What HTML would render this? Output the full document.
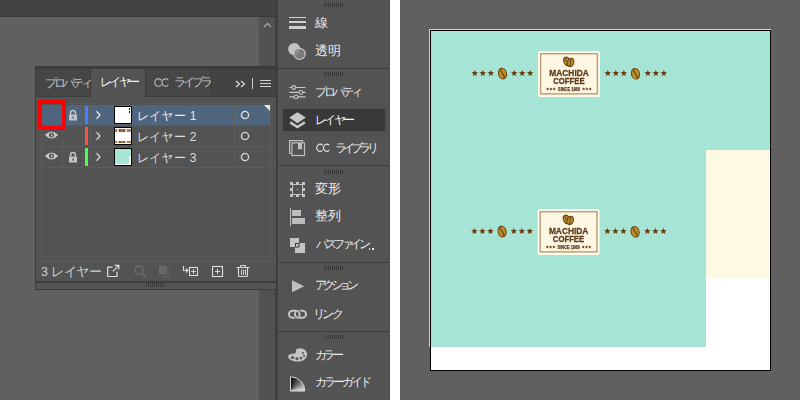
<!DOCTYPE html>
<html><head><meta charset="utf-8">
<style>
*{box-sizing:border-box;margin:0;padding:0}
html,body{width:800px;height:400px;overflow:hidden;background:#606060;font-family:"Liberation Sans",sans-serif;position:relative}
div,span,svg{position:absolute}
.t{color:#e4e4e4;font-size:11px;line-height:12px;white-space:nowrap}
.rt{color:#e6e6e6;font-size:11px;line-height:12px;white-space:nowrap;left:39px}
.grip{height:4px;background:repeating-linear-gradient(90deg,#3a3a3a 0 1px,transparent 1px 2px)}
</style></head><body>
<!-- LEFT CANVAS AREA -->
<div style="left:0;top:0;width:276px;height:400px;background:#606060"></div>
<div style="left:0;top:0;width:276px;height:16px;background:#434343"></div>
<div style="left:0;top:16px;width:276px;height:1px;background:#393939"></div>
<div style="left:259px;top:17px;width:16px;height:383px;background:#515151"></div>
<svg style="left:263px;top:21px" width="10" height="8" viewBox="0 0 10 8"><path d="M1 6 L4.5 2.4 L8 6" fill="none" stroke="#a8a8a8" stroke-width="1.3"/></svg>
<div style="left:275px;top:0;width:3px;height:400px;background:linear-gradient(90deg,#3c3c3c 0 1px,#444 1px 2px,#3c3c3c 2px 3px)"></div>

<!-- FLOATING LAYERS PANEL -->
<div id="lp" style="left:35px;top:66px;width:242px;height:224px;background:#3c3c3c">
  <div style="left:1px;top:3px;width:240px;height:212px;background:#535353"></div>
  <div style="left:1px;top:3px;width:240px;height:27px;background:#434343"></div>
  <div style="left:1px;top:30px;width:240px;height:1px;background:#3d3d3d"></div>
  <div style="left:1px;top:3px;width:55px;height:27px;background:#464646;border-right:1px solid #3c3c3c"></div>
  <div style="left:56px;top:3px;width:54px;height:28px;background:#535353"></div>
  <div style="left:110px;top:3px;width:67px;height:27px;background:#464646;border-left:1px solid #3c3c3c;border-right:1px solid #3c3c3c"></div>
  <div class="t" style="left:10px;top:10px;font-size:12px;line-height:14px;color:#c4c4c4;letter-spacing:-2.9px">プロパティ</div>
  <div class="t" style="left:65px;top:9px;font-size:12px;line-height:14px;color:#f2f2f2;letter-spacing:-2.6px">レイヤー</div>
  <svg style="left:119px;top:10px" width="16" height="12" viewBox="0 0 16 12"><path d="M7.2 4.2 A3.6 3.8 0 1 0 7.2 8.8 M14.4 4.2 A3.6 3.8 0 1 0 14.4 8.8" fill="none" stroke="#c4c4c4" stroke-width="1.1"/></svg>
  <div style="left:139px;top:9px;width:37px;height:14px;overflow:hidden"><span class="t" style="left:0;top:0px;font-size:12px;line-height:14px;color:#c4c4c4;letter-spacing:-2.9px">ライブラリ</span></div>
  <!-- >> | menu -->
  <svg style="left:200px;top:14px" width="12" height="8" viewBox="0 0 12 8"><path d="M1 1 L4.5 4 L1 7 M6 1 L9.5 4 L6 7" fill="none" stroke="#d8d8d8" stroke-width="1.3"/></svg>
  <div style="left:217px;top:12px;width:1px;height:11px;background:#c8c8c8"></div>
  <div style="left:225px;top:14px;width:11px;height:1px;background:#d0d0d0"></div>
  <div style="left:225px;top:17px;width:11px;height:1px;background:#d0d0d0"></div>
  <div style="left:225px;top:20px;width:11px;height:1px;background:#d0d0d0"></div>

  <!-- list box -->
  <div style="left:6px;top:37px;width:230px;height:159px;border:1px solid #5c5c5c;border-top:1px solid #585656;background:#535353"></div>
</div>

<!-- layer rows (absolute page coords) -->
<div style="left:42px;top:105px;width:228px;height:20px;background:#4f657e"></div>
<div style="left:42px;top:125px;width:228px;height:1px;background:#5b5b5b"></div>
<div style="left:42px;top:146px;width:228px;height:1px;background:#5b5b5b"></div>
<div style="left:42px;top:167px;width:228px;height:1px;background:#5b5b5b"></div>
<div style="left:62px;top:105px;width:1px;height:62px;background:#5b5b5b"></div>
<div style="left:82px;top:105px;width:1px;height:62px;background:#5a5a5a"></div>
<div style="left:90px;top:105px;width:1px;height:62px;background:#5b5b5b"></div>
<div style="left:234px;top:105px;width:1px;height:62px;background:#5b5b5b"></div>
<div style="left:234px;top:105px;width:1px;height:20px;background:#6e6660"></div>
<!-- color bars -->
<div style="left:85px;top:106px;width:3px;height:18px;background:#4f7dff"></div>
<div style="left:85px;top:127px;width:3px;height:18px;background:#ff4f4f"></div>
<div style="left:85px;top:148px;width:3px;height:18px;background:#4fff4f"></div>

<!-- eyes -->
<svg style="left:44px;top:130px" width="15" height="10" viewBox="0 0 15 10"><path d="M0.8 5 Q7.5 -2.2 14.2 5 Q7.5 12.2 0.8 5Z" fill="#c8c8c8"/><circle cx="7.5" cy="5" r="2.5" fill="#535353"/><path d="M7.6 2.9 C8.8 4 8.8 6 7.6 7.1 C7 6 7 4 7.6 2.9Z" fill="#c8c8c8"/></svg>
<svg style="left:44px;top:151px" width="15" height="10" viewBox="0 0 15 10"><path d="M0.8 5 Q7.5 -2.2 14.2 5 Q7.5 12.2 0.8 5Z" fill="#c8c8c8"/><circle cx="7.5" cy="5" r="2.5" fill="#535353"/><path d="M7.6 2.9 C8.8 4 8.8 6 7.6 7.1 C7 6 7 4 7.6 2.9Z" fill="#c8c8c8"/></svg>
<!-- locks -->
<svg style="left:68px;top:109px" width="10" height="12" viewBox="0 0 10 12"><path d="M2.6 5.5 V3.8 A2.4 2.4 0 0 1 7.4 3.8 V5.5" fill="none" stroke="#c4c4c4" stroke-width="1.5"/><rect x="1" y="5.5" width="8" height="6" fill="#c4c4c4"/><rect x="4.4" y="7.3" width="1.3" height="2.4" fill="#4f657e"/></svg>
<svg style="left:68px;top:151px" width="10" height="12" viewBox="0 0 10 12"><path d="M2.6 5.5 V3.8 A2.4 2.4 0 0 1 7.4 3.8 V5.5" fill="none" stroke="#c4c4c4" stroke-width="1.5"/><rect x="1" y="5.5" width="8" height="6" fill="#c4c4c4"/><rect x="4.4" y="7.3" width="1.3" height="2.4" fill="#535353"/></svg>
<!-- chevrons -->
<svg style="left:95px;top:110px" width="7" height="10" viewBox="0 0 7 10"><path d="M1.5 1.2 L5 5 L1.5 8.8" fill="none" stroke="#e0e0e0" stroke-width="1.4"/></svg>
<svg style="left:95px;top:131px" width="7" height="10" viewBox="0 0 7 10"><path d="M1.5 1.2 L5 5 L1.5 8.8" fill="none" stroke="#d0d0d0" stroke-width="1.4"/></svg>
<svg style="left:95px;top:152px" width="7" height="10" viewBox="0 0 7 10"><path d="M1.5 1.2 L5 5 L1.5 8.8" fill="none" stroke="#d0d0d0" stroke-width="1.4"/></svg>
<!-- thumbnails -->
<div style="left:114px;top:106px;width:18px;height:18px;background:#000;border-radius:1px"><div style="left:1.3px;top:1.3px;width:15.4px;height:15.4px;background:#fff"></div><div style="left:15px;top:1.5px;width:1px;height:2px;background:#000"></div><div style="left:14.5px;top:5px;width:1.5px;height:1.5px;background:#000"></div></div>
<div style="left:114px;top:127px;width:18px;height:18px;background:#000;border-radius:1px"><div style="left:1.3px;top:1.3px;width:15.4px;height:15.4px;background:#fff"></div>
  <div style="left:1.3px;top:2px;width:15.4px;height:2.5px;background:linear-gradient(90deg,#b08050 0 2px,#e8d8c0 2px 4px,#7a4a1c 4px 5px,#9a6a38 5px 9px,#7a4a1c 9px 10px,#e8d8c0 10px 12px,#b08050 12px 15.4px)"></div>
  <div style="left:1.3px;top:13.5px;width:15.4px;height:2.5px;background:linear-gradient(90deg,#b08050 0 2px,#e8d8c0 2px 4px,#7a4a1c 4px 5px,#9a6a38 5px 9px,#7a4a1c 9px 10px,#e8d8c0 10px 12px,#b08050 12px 15.4px)"></div>
</div>
<div style="left:114px;top:148px;width:18px;height:18px;background:#000;border-radius:1px"><div style="left:1.3px;top:1.3px;width:15.4px;height:15.4px;background:#a6e4d6"></div><div style="left:15px;top:8px;width:1.7px;height:7.5px;background:#fef9e3"></div><div style="left:1.3px;top:15.5px;width:15.4px;height:1.2px;background:#fff"></div></div>
<!-- labels -->
<div class="t" style="left:136.5px;top:110px;font-size:12px;line-height:12px;color:#e8e8e8;letter-spacing:0.4px">レイヤー 1</div>
<div class="t" style="left:136.5px;top:131px;font-size:12px;line-height:12px;color:#dcdcdc;letter-spacing:0.4px">レイヤー 2</div>
<div class="t" style="left:136.5px;top:152px;font-size:12px;line-height:12px;color:#dcdcdc;letter-spacing:0.4px">レイヤー 3</div>
<!-- round indicators -->
<svg style="left:239px;top:109px" width="12" height="12" viewBox="0 0 12 12"><circle cx="6" cy="6" r="3.6" fill="none" stroke="#e0e0e0" stroke-width="1.3"/></svg>
<svg style="left:239px;top:130px" width="12" height="12" viewBox="0 0 12 12"><circle cx="6" cy="6" r="3.6" fill="none" stroke="#d4d4d4" stroke-width="1.3"/></svg>
<svg style="left:239px;top:151px" width="12" height="12" viewBox="0 0 12 12"><circle cx="6" cy="6" r="3.6" fill="none" stroke="#d4d4d4" stroke-width="1.3"/></svg>
<svg style="left:264px;top:105px" width="6" height="6" viewBox="0 0 6 6"><path d="M0 0 H6 V6Z" fill="#e8e8e8"/></svg>
<!-- red highlight box -->
<div style="left:38px;top:100px;width:28px;height:30px;border:4px solid #ff0000"></div>

<!-- footer -->
<div class="t" style="left:41px;top:266px;font-size:12.5px;color:#cfcfcf;letter-spacing:-0.3px">3 レイヤー</div>
<svg style="left:105px;top:263px" width="16" height="16" viewBox="0 0 16 16"><path d="M7.5 4.2 H2.7 V13.5 H12 V8.8" fill="none" stroke="#dcdcdc" stroke-width="1.2"/><path d="M7.8 8.4 L13.6 2.6 M9.6 2.4 H13.8 V6.6" fill="none" stroke="#dcdcdc" stroke-width="1.2"/></svg>
<svg style="left:132.5px;top:263px" width="14" height="16" viewBox="0 0 14 16"><circle cx="6" cy="7" r="4.2" fill="none" stroke="#6e6e6e" stroke-width="1.4"/><path d="M9 10 L12.5 13.8" stroke="#6e6e6e" stroke-width="1.8"/></svg>
<svg style="left:157px;top:263px" width="14" height="16" viewBox="0 0 14 16"><rect x="2.5" y="3.5" width="7" height="7" fill="#6a6a6a" stroke="#6a6a6a"/><rect x="5.5" y="6.5" width="6.5" height="7" fill="none" stroke="#626262"/></svg>
<svg style="left:181px;top:263px" width="20" height="16" viewBox="0 0 20 16"><path d="M2.5 3 V7.5 H7 M5 5.5 L7 7.5 L5 9.5" fill="none" stroke="#dcdcdc" stroke-width="1.1"/><rect x="8.5" y="4.5" width="8" height="8" fill="none" stroke="#dcdcdc" stroke-width="1.1"/><path d="M12.5 6.2 V10.8 M10.2 8.5 H14.8" stroke="#dcdcdc" stroke-width="1"/></svg>
<svg style="left:210px;top:263px" width="16" height="16" viewBox="0 0 16 16"><rect x="2.5" y="3.5" width="10" height="10" fill="none" stroke="#dcdcdc" stroke-width="1.1"/><path d="M7.5 6 V11 M5 8.5 H10" stroke="#dcdcdc" stroke-width="1"/></svg>
<svg style="left:235px;top:263px" width="16" height="16" viewBox="0 0 16 16"><path d="M1.5 4.5 H14.5 M5.5 4.5 V2.5 H10.5 V4.5" fill="none" stroke="#dcdcdc" stroke-width="1"/><path d="M3.5 5 V13 Q3.5 13.5 4.5 13.5 H11.5 Q12.5 13.5 12.5 13 V5" fill="none" stroke="#dcdcdc" stroke-width="1.1"/><path d="M6.5 6.5 V12 M8.5 6.5 V12 M10.5 6.5 V12" stroke="#d4d4d4" stroke-width="1"/></svg>

<!-- bottom grip bar -->
<div style="left:36px;top:283px;width:240px;height:6px;background:#545454"></div>
<div class="grip" style="left:146px;top:283px;width:20px;height:4px"></div>

<!-- RIGHT ICON PANEL -->
<div style="left:278px;top:0;width:112px;height:400px;background:#535353;border-left:1px solid #585858"></div>
<div class="grip" style="left:324px;top:3px;width:20px"></div>
<div style="left:277px;top:68px;width:113px;height:1px;background:#3e3e3e"></div>
<div class="grip" style="left:324px;top:72px;width:20px"></div>
<div style="left:277px;top:165px;width:113px;height:1px;background:#3e3e3e"></div>
<div class="grip" style="left:324px;top:170px;width:20px"></div>
<div style="left:277px;top:262px;width:113px;height:1px;background:#3e3e3e"></div>
<div class="grip" style="left:324px;top:266px;width:20px"></div>
<div style="left:277px;top:331px;width:113px;height:1px;background:#3e3e3e"></div>
<div class="grip" style="left:324px;top:335px;width:20px"></div>
<div style="left:283px;top:108.5px;width:102px;height:22px;background:#383838;border-radius:2px;box-shadow:0 0 0 0.5px #4a4a4a"></div>

<!-- stroke icon -->
<div style="left:289px;top:17px;width:17px;height:1px;background:#d0d0d0"></div>
<div style="left:289px;top:21px;width:17px;height:2px;background:#d0d0d0"></div>
<div style="left:289px;top:26px;width:17px;height:3px;background:#d0d0d0"></div>
<div class="t" style="left:315px;top:16px;font-size:13px;line-height:14px;color:#ececec">線</div>
<!-- transparency icon -->
<svg style="left:286px;top:41px" width="22" height="21" viewBox="0 0 22 21"><defs><clipPath id="c1"><circle cx="8.2" cy="8.1" r="6.1"/></clipPath></defs><circle cx="8.2" cy="8.1" r="6.1" fill="#c2c2c2"/><circle cx="13.6" cy="12.9" r="5.6" fill="#7c7c7c" stroke="#c4c4c4" stroke-width="1.2"/><circle cx="13.6" cy="12.9" r="5" fill="#8e8e8e" clip-path="url(#c1)"/></svg>
<div class="t" style="left:315px;top:44px;font-size:13px;line-height:14px;color:#ececec">透明</div>
<!-- properties sliders -->
<svg style="left:288px;top:85px" width="18" height="16" viewBox="0 0 18 16"><g stroke="#c8c8c8" stroke-width="1.1" fill="#535353"><path d="M1.5 2.5 H17.5 M1.5 7.4 H17.5 M1.5 11.9 H17.5"/><circle cx="5.8" cy="2.5" r="1.9"/><circle cx="12.9" cy="7.4" r="1.9"/><circle cx="8" cy="11.9" r="1.9"/></g></svg>
<div class="t" style="left:315px;top:85px;font-size:12px;line-height:14px;color:#ececec;letter-spacing:-3.00px">プロパティ</div>
<!-- layers icon -->
<svg style="left:287px;top:111px" width="20" height="20" viewBox="0 0 20 20"><path d="M10.4 1.2 L18.8 6.6 L10.4 12.3 L2.3 6.6Z" fill="#c8c8c8"/><path d="M3.2 11.4 L10.4 16 L17.8 11.4" fill="none" stroke="#c8c8c8" stroke-width="2.6"/></svg>
<div class="t" style="left:315px;top:113px;font-size:12px;line-height:14px;color:#f2f2f2;letter-spacing:-2.60px">レイヤー</div>
<!-- CC libraries icon -->
<svg style="left:287px;top:139px" width="20" height="18" viewBox="0 0 20 18"><path d="M4.5 14.5 H2.6 V1.6 H15.5 V3.4" fill="none" stroke="#c0c0c0" stroke-width="1.2"/><rect x="4.9" y="3.9" width="12.6" height="12.6" fill="none" stroke="#c0c0c0" stroke-width="1.2"/><path d="M11 4 V11 L13 9.6 L15 11 V4Z" fill="#c0c0c0"/></svg>
<svg style="left:316px;top:142px" width="15" height="12" viewBox="0 0 15 12"><path d="M6.6 3.3 A3.3 3.6 0 1 0 6.6 8.2 M13.3 3.3 A3.3 3.6 0 1 0 13.3 8.2" fill="none" stroke="#e4e4e4" stroke-width="1.1"/></svg>
<div class="t" style="left:335px;top:141px;font-size:12px;line-height:14px;color:#ececec;letter-spacing:-3.90px">ライブラリ</div>
<!-- transform icon -->
<svg style="left:289px;top:181px" width="17" height="17" viewBox="0 0 17 17"><rect x="3.5" y="3.5" width="10" height="10" fill="none" stroke="#c0c0c0" stroke-width="1"/><g fill="#c4c4c4"><rect x="1" y="1" width="3" height="3"/><rect x="7" y="1" width="3" height="3"/><rect x="13" y="1" width="3" height="3"/><rect x="1" y="7" width="3" height="3"/><rect x="13" y="7" width="3" height="3"/><rect x="1" y="13" width="3" height="3"/><rect x="7" y="13" width="3" height="3"/><rect x="13" y="13" width="3" height="3"/><rect x="8" y="8" width="1" height="1"/></g></svg>
<div class="t" style="left:315px;top:182px;font-size:13px;line-height:14px;color:#ececec">変形</div>
<!-- align icon -->
<div style="left:290px;top:208px;width:1px;height:18px;background:#bdbdbd"></div>
<div style="left:292px;top:210px;width:9px;height:6px;background:#bdbdbd"></div>
<div style="left:292px;top:218px;width:13px;height:6px;background:#bdbdbd"></div>
<div class="t" style="left:315px;top:209px;font-size:13px;line-height:14px;color:#ececec">整列</div>
<!-- pathfinder icon -->
<svg style="left:289px;top:236px" width="18" height="18" viewBox="0 0 18 18"><rect x="1" y="2" width="9" height="9" fill="#c4c4c4"/><rect x="6" y="7" width="10" height="10" fill="#c4c4c4"/><rect x="6.5" y="7.5" width="3.5" height="3.5" fill="#c4c4c4" stroke="#3c3c3c" stroke-width="1"/></svg>
<div class="t" style="left:316px;top:237px;font-size:12px;line-height:14px;color:#ececec;letter-spacing:-3.40px">パスファイン</div>
<div style="left:368.5px;top:248px;width:1.5px;height:1.5px;background:#e0e0e0"></div><div style="left:372px;top:248px;width:1.5px;height:1.5px;background:#e0e0e0"></div>
<!-- action icon -->
<svg style="left:290px;top:279px" width="16" height="15" viewBox="0 0 16 15"><path d="M2 1.2 L14.2 7.2 L2 13.2Z" fill="#c0c0c0"/></svg>
<div class="t" style="left:315px;top:278px;font-size:12px;line-height:14px;color:#ececec;letter-spacing:-4.00px">アクション</div>
<!-- link icon -->
<svg style="left:287px;top:307px" width="21" height="14" viewBox="0 0 21 14"><g fill="none" stroke-width="2"><path d="M5.5 3.8 H9.1 A3.5 3.5 0 0 1 12.6 7.3 A3.5 3.5 0 0 1 9.1 10.8 H5.5 A3.5 3.5 0 0 1 2 7.3 A3.5 3.5 0 0 1 5.5 3.8Z" stroke="#c4c4c4"/><path d="M11.4 3.8 H15.5 A3.5 3.5 0 0 1 19 7.3 A3.5 3.5 0 0 1 15.5 10.8 H11.4 A3.5 3.5 0 0 1 7.9 7.3 A3.5 3.5 0 0 1 11.4 3.8Z" stroke="#c4c4c4"/><path d="M9.1 3.8 A3.5 3.5 0 0 1 12.3 5.8" stroke="#535353" stroke-width="3.6"/><path d="M9.1 3.8 A3.5 3.5 0 0 1 12.3 5.8" stroke="#c4c4c4"/><path d="M8.3 9.2 A3.5 3.5 0 0 0 11.4 10.8" stroke="#535353" stroke-width="3.6"/><path d="M8.3 9.2 A3.5 3.5 0 0 0 11.4 10.8" stroke="#c4c4c4"/></g></svg>
<div class="t" style="left:313px;top:307px;font-size:12px;line-height:14px;color:#ececec;letter-spacing:-2.60px">リンク</div>
<!-- color palette icon -->
<svg style="left:287px;top:346px" width="21" height="17" viewBox="0 0 21 17"><path d="M9.5 3.2 C12 1.6 18 1.8 19.8 6.5 C21 10 18.5 14.8 13 15.4 C7.5 16 1.2 14.2 1.2 10.5 C1.2 8 4 7.8 7.5 7.4 C10 7.1 8 4.2 9.5 3.2Z" fill="#c4c4c4"/><g fill="#5a5a5a"><circle cx="5.5" cy="11.5" r="1.6"/><circle cx="10" cy="12.6" r="1.6"/><circle cx="14" cy="12.1" r="1.4"/><circle cx="17" cy="9.8" r="1.1"/><circle cx="16" cy="7" r="1.1"/></g></svg>
<div class="t" style="left:315px;top:348px;font-size:12px;line-height:14px;color:#ececec;letter-spacing:-3.70px">カラー</div>
<!-- color guide icon -->
<svg style="left:289px;top:375px" width="18" height="17" viewBox="0 0 18 17"><path d="M1.5 16 L1.50 1.70 A14.3 14.3 0 0 1 5.20 2.19Z" fill="#161616" stroke="#161616" stroke-width="0.3"/><path d="M1.5 16 L5.20 2.19 A14.3 14.3 0 0 1 8.65 3.62Z" fill="#333" stroke="#333" stroke-width="0.3"/><path d="M1.5 16 L8.65 3.62 A14.3 14.3 0 0 1 11.61 5.89Z" fill="#555" stroke="#555" stroke-width="0.3"/><path d="M1.5 16 L11.61 5.89 A14.3 14.3 0 0 1 13.88 8.85Z" fill="#7a7a7a" stroke="#7a7a7a" stroke-width="0.3"/><path d="M1.5 16 L13.88 8.85 A14.3 14.3 0 0 1 15.31 12.30Z" fill="#a2a2a2" stroke="#a2a2a2" stroke-width="0.3"/><path d="M1.5 16 L15.31 12.30 A14.3 14.3 0 0 1 15.80 16.00Z" fill="#cfcfcf" stroke="#cfcfcf" stroke-width="0.3"/><path d="M1.5 1.7 V16 H15.8 A14.3 14.3 0 0 0 1.5 1.7Z" fill="none" stroke="#d4d4d4" stroke-width="1"/></svg>
<div class="t" style="left:315px;top:375px;font-size:12px;line-height:14px;color:#ececec;letter-spacing:-3.00px">カラーガイド</div>
<div style="left:389px;top:0;width:1px;height:400px;background:#4c4c4c"></div>
<div style="left:390px;top:0;width:10px;height:400px;background:#ffffff"></div>

<!-- ARTBOARD -->
<div style="left:400px;top:0;width:400px;height:400px;background:#606060"></div>
<div style="left:429px;top:29px;width:342px;height:1px;background:#a6e4d6"></div>
<div style="left:429px;top:29px;width:1px;height:318px;background:#a6e4d6"></div>
<div style="left:430px;top:30px;width:341px;height:341px;background:#fff;border:1px solid #000"></div>
<div style="left:431px;top:31px;width:339px;height:119px;background:#a6e4d6"></div>
<div style="left:431px;top:150px;width:275px;height:197px;background:#a6e4d6"></div>
<div style="left:706px;top:150px;width:64px;height:127px;background:#fef9e3"></div>
<svg style="left:431px;top:31px;will-change:transform" width="339" height="339" viewBox="431 31 339 339">
<defs>
  <polygon id="st" points="0.00,-3.40 0.88,-1.21 3.23,-1.05 1.42,0.46 2.00,2.75 0.00,1.50 -2.00,2.75 -1.42,0.46 -3.23,-1.05 -0.88,-1.21" fill="#6a3c10"/>
  <g id="bean">
    <ellipse cx="0" cy="0" rx="4.0" ry="5.4" fill="#bb9028" stroke="#74491a" stroke-width="1.1"/>
    <path d="M-0.6 -5 C-2.4 -1.5 2.2 1.2 0.6 5" fill="none" stroke="#74491a" stroke-width="1.3"/>
  </g>
  <g id="logo">
    <use href="#st" x="474.8" y="73.3"/><use href="#st" x="482.8" y="73.3"/><use href="#st" x="490.8" y="73.3"/>
    <use href="#bean" transform="translate(502.5 73.6) rotate(-14)"/>
    <use href="#st" x="514.2" y="73.3"/><use href="#st" x="522.2" y="73.3"/><use href="#st" x="530.2" y="73.3"/>
    <use href="#st" x="607.8" y="73.3"/><use href="#st" x="615.8" y="73.3"/><use href="#st" x="623.8" y="73.3"/>
    <use href="#bean" transform="translate(635.5 73.8) rotate(-14)"/>
    <use href="#st" x="647.8" y="73.3"/><use href="#st" x="655.8" y="73.3"/><use href="#st" x="663.8" y="73.3"/>
    <!-- badge -->
    <rect x="538" y="51" width="62" height="46" rx="2" fill="#fffbea"/>
    <rect x="540.6" y="53.7" width="56.8" height="40.2" fill="#fdf7e4" stroke="#bba07c" stroke-width="1.5"/>
    <!-- coffee beans in badge -->
    <g transform="translate(566.8 61.4) rotate(-20)"><ellipse rx="2.9" ry="4.3" fill="#b8902a" stroke="#6e4818" stroke-width="1.1"/><path d="M-0.4 -3.6 C-1.2 -1 1 1.2 0.3 3.6" fill="none" stroke="#6e4818" stroke-width="1"/></g>
    <g transform="translate(570.6 62.4) rotate(20)"><ellipse rx="3.1" ry="4.3" fill="#b8902a" stroke="#6e4818" stroke-width="1.1"/><path d="M-0.4 -3.6 C-1.2 -1 1 1.2 0.3 3.6" fill="none" stroke="#6e4818" stroke-width="1"/></g>
    <text x="549.3" y="75.9" textLength="39.5" lengthAdjust="spacingAndGlyphs" font-family="Liberation Sans" font-weight="bold" font-size="9.7" fill="#5e3a1a" stroke="#5e3a1a" stroke-width="0.3">MACHIDA</text>
    <text x="553.2" y="83.6" textLength="31.4" lengthAdjust="spacingAndGlyphs" font-family="Liberation Sans" font-weight="bold" font-size="9.3" fill="#5e3a1a" stroke="#5e3a1a" stroke-width="0.3">COFFEE</text>
    <g transform="translate(0 0)">
      <g transform="scale(0.55)"><use href="#st" x="995.8" y="161.9"/><use href="#st" x="1001.8" y="161.9"/><use href="#st" x="1007.8" y="161.9"/><use href="#st" x="1061.1" y="161.9"/><use href="#st" x="1067.1" y="161.9"/><use href="#st" x="1073.1" y="161.9"/></g>
      <text x="558" y="90.6" textLength="22" lengthAdjust="spacingAndGlyphs" font-family="Liberation Sans" font-weight="bold" font-size="5" fill="#5e3a1a" stroke="#5e3a1a" stroke-width="0.25">SINCE 1989</text>
    </g>
  </g>
</defs>
<use href="#logo"/>
<use href="#logo" x="-0.4" y="158"/>
</svg>
</body></html>
